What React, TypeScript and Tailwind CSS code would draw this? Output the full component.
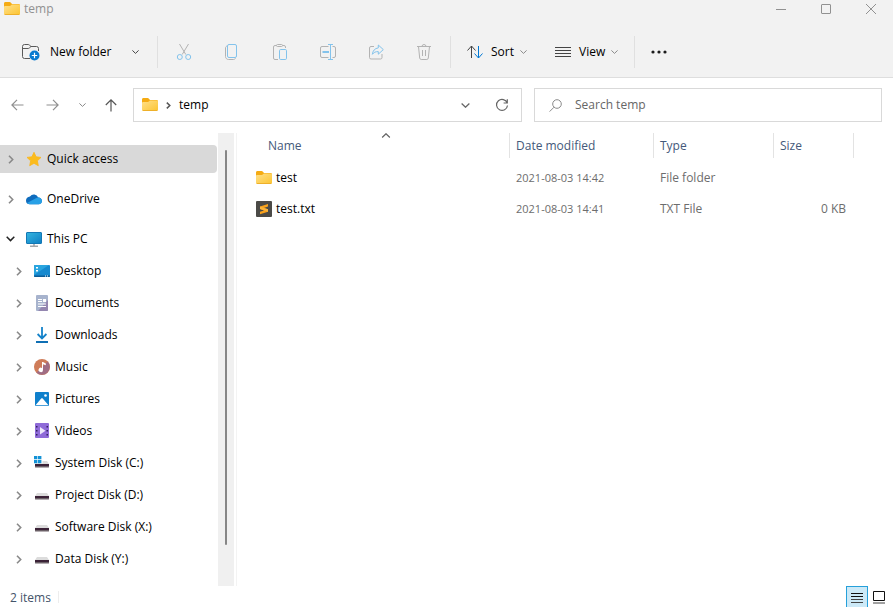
import { useState } from 'react';
import type { ReactNode } from 'react';

interface NavItem {
  label: string;
  icon: ReactNode;
}

interface FileRow {
  name: string;
  modified: string;
  type: string;
  size: string;
  icon: ReactNode;
}

const FolderIcon = () => (
  <svg width="16" height="16" viewBox="0 0 16 16" className="shrink-0" aria-hidden="true">
    <defs>
      <linearGradient id="folderFront" x1="0" y1="0" x2="1" y2="1">
        <stop offset="0" stopColor="#ffe08a" />
        <stop offset="1" stopColor="#fcc430" />
      </linearGradient>
    </defs>
    <path d="M0 2.500C0 1.700.6 1 1.400 1h4.200c.5 0 .8.2 1.100.5L8 3h6.600c.8 0 1.400.6 1.400 1.400V10H0z" fill="#f5ab13" />
    <path d="M0 6.200C0 5.500.5 5 1.200 5h4.600c.4 0 .7-.1 1-.4l.8-.8c.3-.2.5-.3.900-.3h6.300c.7 0 1.200.5 1.200 1.200v7.900c0 .8-.6 1.400-1.400 1.400H1.400C.6 14 0 13.400 0 12.600z" fill="url(#folderFront)" />
    <path d="M.3 13c.2.600.6 1 1.200 1h13c.6 0 1-.4 1.200-1z" fill="#eeb02a" />
  </svg>
);

const SublimeIcon = () => (
  <svg width="16" height="16" viewBox="0 0 16 16" className="shrink-0" aria-hidden="true">
    <rect width="16" height="16" rx="1" fill="#4b4a47" />
    <path d="M12 3v2.600L8 6.900l4 1.300v2.500L4 13.300v-2.600l4.100-1.300L4 8.100V5.500z" fill="#f9a11b" />
    <path d="M4 8.100l8 2.600V8.200L8 6.900 4 5.500z" fill="#fbb43c" />
  </svg>
);

const Chevron = ({ className, width = 7, height = 4 }: { className?: string; width?: number; height?: number }) => (
  <svg width={width} height={height} viewBox="0 0 7 4" className={className} fill="none" stroke="currentColor" strokeWidth="1" aria-hidden="true">
    <path d="M.4.4l3.100 3L6.600.4" />
  </svg>
);

const ChevronRight = ({ className }: { className?: string }) => (
  <svg width="6" height="9" viewBox="0 0 6 9" className={className} fill="none" stroke="currentColor" strokeWidth="1.600" aria-hidden="true">
    <path d="M1 .7l3.700 3.800L1 8.300" />
  </svg>
);

const DiskIcon = ({ system = false }: { system?: boolean }) => (
  <svg width="16" height="16" viewBox="0 0 16 16" aria-hidden="true">
    <path d="M3 6h10l2 3H1z" fill="#dcdcdc" />
    <rect x="1" y="9" width="14" height="3.500" rx=".5" fill="#6a5f66" />
    <rect x="1" y="9" width="14" height="2" fill="#3b2237" />
    {system && (
      <>
        <rect width="8.500" height="8.500" fill="#fff" />
        <path d="M0 1h3.400v3.300H0zM4 1h3.400v3.300H4zM0 5h3.400v3.300H0zM4 5h3.400v3.300H4z" fill="#1392d6" />
      </>
    )}
  </svg>
);

const StarIcon = () => (
  <svg width="16" height="16" viewBox="0 0 16 16" aria-hidden="true">
    <path d="M8 1.300l2.100 4.500 4.900.6-3.600 3.400.9 4.900L8 12.300l-4.300 2.400.9-4.900L1 6.400l4.900-.6z" fill="#fbbc1d" stroke="#fbb51a" strokeWidth=".8" strokeLinejoin="round" />
  </svg>
);

const CloudIcon = () => (
  <svg width="16" height="16" viewBox="0 0 16 16" aria-hidden="true">
    <path d="M4 5.500A4.600 4.600 0 0 1 12.200 6.600 3.400 3.400 0 0 1 16 10c0 1.900-1.500 3.200-3.300 3.200H3.800A3.800 3.800 0 0 1 0 9.400c0-2 1.700-3.700 4-3.900z" fill="#0f6cbd" />
    <path d="M1 12l8-4.200c1.500-.8 2.600-1.300 4-1.200 1.700.2 3 1.700 3 3.400 0 1.900-1.500 3.200-3.300 3.200H3.800C2.600 13.200 1.600 12.700 1 12z" fill="#28a0e6" />
  </svg>
);

const ComputerIcon = () => (
  <svg width="16" height="16" viewBox="0 0 16 16" aria-hidden="true">
    <defs>
      <linearGradient id="screen" x1="0" y1="0" x2="1" y2="1">
        <stop offset="0" stopColor="#35b5e0" />
        <stop offset="1" stopColor="#0f7fc4" />
      </linearGradient>
    </defs>
    <path d="M7 12h2v3H7z" fill="#b5b9bd" />
    <path d="M4 14.500h8V16H4z" fill="#a3a7ab" />
    <rect x=".5" y="1.500" width="15" height="11" rx=".5" fill="url(#screen)" stroke="#1478b5" />
  </svg>
);

const DesktopIcon = () => (
  <svg width="16" height="16" viewBox="0 0 16 16" aria-hidden="true">
    <rect y="2" width="16" height="12" rx="1" fill="#1689cf" />
    <path d="M0 12L15 2H1a1 1 0 0 0-1 1z" fill="#2aa5df" />
    <path d="M0 12.500h16v.5a1 1 0 0 1-1 1H1a1 1 0 0 1-1-1z" fill="#0b5c97" />
    <path d="M2 4h2v1.500H2zM2 7h2v1.500H2zM11 12.500h1v1h-1zM13 12.500h1v1h-1z" fill="#fff" />
  </svg>
);

const DocumentIcon = () => (
  <svg width="16" height="16" viewBox="0 0 16 16" aria-hidden="true">
    <rect x="2" width="12" height="16" rx="1" fill="#a7b3cd" />
    <path d="M14 5v10a1 1 0 0 1-1 1H4z" fill="#9486b0" />
    <path d="M4 4h4v1H4zM4 6h4v1H4zM9 4h3v3H9zM4 8.500h8v1H4zM4 11h8v1H4z" fill="#fff" />
  </svg>
);

const DownloadIcon = () => (
  <svg width="16" height="16" viewBox="0 0 16 16" fill="none" aria-hidden="true">
    <path d="M8 0v11.500M3.600 7L8 11.500 12.400 7" stroke="#1583ca" strokeWidth="1.800" />
    <path d="M2 15h12" stroke="#0f6fb4" strokeWidth="2" />
  </svg>
);

const MusicIcon = () => (
  <svg width="16" height="16" viewBox="0 0 16 16" aria-hidden="true">
    <circle cx="8" cy="8" r="8" fill="#cf7c59" />
    <path d="M13.700 2.400A8 8 0 0 1 2.400 13.700z" fill="#a06d84" />
    <path d="M8 3h1l2.800 1.600v1.700L9 5.300V11a2.200 2.200 0 1 1-1-1.900z" fill="#fff" />
  </svg>
);

const PictureIcon = () => (
  <svg width="16" height="16" viewBox="0 0 16 16" aria-hidden="true">
    <rect x="1" y="1" width="14" height="14" rx="1" fill="#0f80cc" />
    <path d="M1.500 14.200L7.200 7.600c.4-.5 1.100-.5 1.500 0l5.800 6.600z" fill="#fff" />
    <circle cx="11.500" cy="4.500" r="1.300" fill="#fff" />
  </svg>
);

const VideoIcon = () => (
  <svg width="16" height="16" viewBox="0 0 16 16" aria-hidden="true">
    <rect x="1" width="14" height="15" rx="1" fill="#8f6bd8" />
    <path d="M2 3h1.500v1.500H2zM2 7h1.500v1.500H2zM2 11h1.500v1.500H2zM12.500 3H14v1.500h-1.500zM12.500 7H14v1.500h-1.500zM12.500 11H14v1.500h-1.500z" fill="#33205e" />
    <path d="M6 4l5.500 3.700L6 11.500z" fill="#eee8fb" />
  </svg>
);

const pcItems: NavItem[] = [
  { label: 'Desktop', icon: <DesktopIcon /> },
  { label: 'Documents', icon: <DocumentIcon /> },
  { label: 'Downloads', icon: <DownloadIcon /> },
  { label: 'Music', icon: <MusicIcon /> },
  { label: 'Pictures', icon: <PictureIcon /> },
  { label: 'Videos', icon: <VideoIcon /> },
  { label: 'System Disk (C:)', icon: <DiskIcon system /> },
  { label: 'Project Disk (D:)', icon: <DiskIcon /> },
  { label: 'Software Disk (X:)', icon: <DiskIcon /> },
  { label: 'Data Disk (Y:)', icon: <DiskIcon /> }
];

const files: FileRow[] = [
  { name: 'test', modified: '2021-08-03 14:42', type: 'File folder', size: '', icon: <FolderIcon /> },
  { name: 'test.txt', modified: '2021-08-03 14:41', type: 'TXT File', size: '0 KB', icon: <SublimeIcon /> }
];

const GRAY = '#b3b3b3';
const BLUE = '#83c3ec';

const actions: NavItem[] = [
  {
    label: 'Cut',
    icon: (
      <>
        <path d="M4.500 1l6.300 10.500M13.500 1L7.200 11.500" stroke={GRAY} />
        <circle cx="4.800" cy="14" r="2.500" stroke={BLUE} />
        <circle cx="13.200" cy="14" r="2.500" stroke={BLUE} />
      </>
    )
  },
  {
    label: 'Copy',
    icon: (
      <>
        <path d="M4 3c-.9.300-1.500 1.100-1.500 2v8.500c0 1.700 1.300 3 3 3h5c.9 0 1.600-.5 2-1.200" stroke={GRAY} />
        <rect x="4.500" y="1.500" width="9" height="13" rx="1.500" stroke={BLUE} />
      </>
    )
  },
  {
    label: 'Paste',
    icon: (
      <>
        <path d="M7 16.500H4A1.500 1.500 0 0 1 2.500 15V4A1.500 1.500 0 0 1 4 2.500h1.500M11.500 2.500H13A1.500 1.500 0 0 1 14.500 4v1" stroke={GRAY} />
        <rect x="5.500" y="1.500" width="6" height="2" rx="1" stroke={GRAY} />
        <rect x="8.500" y="6.500" width="7" height="10" rx="1.200" stroke={BLUE} />
      </>
    )
  },
  {
    label: 'Rename',
    icon: (
      <>
        <path d="M9.500 3.500H3A1.500 1.500 0 0 0 1.500 5v8A1.500 1.500 0 0 0 3 14.500h6.500M13.500 3.500H15A1.500 1.500 0 0 1 16.500 5v8a1.500 1.500 0 0 1-1.500 1.500h-1.500" stroke={GRAY} />
        <path d="M11.500 1.500v15M9 1.500h5M9 16.500h5" stroke={BLUE} />
        <path d="M3.500 9H10" stroke={BLUE} strokeWidth="2" />
      </>
    )
  },
  {
    label: 'Share',
    icon: (
      <>
        <path d="M7 3.500H4A1.500 1.500 0 0 0 2.500 5v9.500A1.500 1.500 0 0 0 4 16h9.500a1.500 1.500 0 0 0 1.500-1.500V11" stroke={GRAY} />
        <path d="M11.300 2l5 4.600-5 4.600V8.600c-2.800-.1-4.500.8-5.900 2.700.3-3.500 2.400-6 5.900-6.400z" stroke={BLUE} strokeLinejoin="round" />
      </>
    )
  },
  {
    label: 'Delete',
    icon: (
      <>
        <path d="M2 3.500h14M7 3.500a2 2 0 0 1 4 0M3.500 3.500l1.200 11.600c.1.800.7 1.400 1.500 1.400h5.600c.8 0 1.400-.6 1.500-1.400l1.200-11.600M7.500 7v6M10.500 7v6" stroke={GRAY} />
      </>
    )
  }
];

const Divider = () => <div className="h-8 w-px shrink-0 bg-[#e0e0e0]" />;

const NavRow = ({ item, open = false, nested = false, selected = false }: { item: NavItem; open?: boolean; nested?: boolean; selected?: boolean }) => (
  <button
    type="button"
    className={`flex w-full items-center text-left ${nested ? 'pl-3.5' : 'pl-1.5'} ${
      selected ? 'h-7 rounded-r-sm bg-[#d9d9d9]' : 'h-8'
    }`}
  >
    <span className="flex w-5 items-center pl-0.5">
      {open ? (
        <svg width="9" height="6" viewBox="0 0 9 6" className="-ml-0.5 text-[#222]" fill="none" stroke="currentColor" strokeWidth="1.500" aria-hidden="true">
          <path d="M.7.8l3.800 3.800L8.300.8" />
        </svg>
      ) : (
        <ChevronRight className="text-[#8a8a8a]" />
      )}
    </span>
    {item.icon}
    <span className="pl-[5px]">{item.label}</span>
  </button>
);

const TitleBar = () => (
  <div className="flex h-4 items-center pt-px pl-1 text-[#919191]">
    <FolderIcon />
    <h1 className="flex-1 pl-1">temp</h1>
    <button type="button" aria-label="Minimize" className="flex w-[45px] justify-center">
      <svg width="10" height="10" viewBox="0 0 10 10" stroke="currentColor" aria-hidden="true">
        <path d="M0 5.500h10" />
      </svg>
    </button>
    <button type="button" aria-label="Maximize" className="flex w-[45px] justify-center">
      <svg width="10" height="10" viewBox="0 0 10 10" fill="none" stroke="currentColor" aria-hidden="true">
        <rect x=".5" y=".5" width="9" height="9" rx=".5" />
      </svg>
    </button>
    <button type="button" aria-label="Close" className="flex w-[45px] justify-center">
      <svg width="10" height="10" viewBox="0 0 10 10" stroke="currentColor" aria-hidden="true">
        <path d="M0 0l10 10M10 0L0 10" />
      </svg>
    </button>
  </div>
);

const Toolbar = () => (
  <div className="flex h-[62px] items-center border-b border-[#dedede] pt-2.5">
    <button type="button" className="flex w-[157px] shrink-0 items-center pl-[22px] text-left">
      <svg width="18" height="18" viewBox="0 0 18 18" fill="none" aria-hidden="true">
        <path d="M8 15.500H2.500a2 2 0 0 1-2-2v-10a2 2 0 0 1 2-2H6c.6 0 1 .2 1.400.6L9 3.500h5.500a2 2 0 0 1 2 2V8M.5 5.500H6c.5 0 1-.2 1.300-.500L9 3.500" stroke="#5a5a5a" />
        <circle cx="12.500" cy="12.500" r="5" fill="#0a7bd0" />
        <path d="M12.500 9.800v5.400M9.800 12.500h5.400" stroke="#fff" strokeWidth="1.200" />
      </svg>
      <span className="w-[92px] pl-2.5">New folder</span>
      <Chevron className="text-[#444]" />
    </button>
    <Divider />
    <div className="flex px-0.5">
      {actions.map(action => (
        <button key={action.label} type="button" aria-label={action.label} className="flex w-12 justify-center">
          <svg width="18" height="18" viewBox="0 0 18 18" fill="none" aria-hidden="true">
            {action.icon}
          </svg>
        </button>
      ))}
    </div>
    <Divider />
    <button type="button" className="flex w-[88px] shrink-0 items-center pl-4 text-left">
      <svg width="16" height="16" viewBox="0 0 16 16" fill="none" aria-hidden="true">
        <path d="M4.500 14V2M.5 6.500l4-4.500 4 4.500" stroke="#444" />
        <path d="M11.500 2v12M7.500 9.500l4 4.500 4-4.500" stroke="#0078d4" />
      </svg>
      <span className="w-[37px] pl-2">Sort</span>
      <Chevron className="text-[#8a8a8a]" />
    </button>
    <button type="button" className="flex w-[95px] shrink-0 items-center pl-4 text-left">
      <svg width="16" height="16" viewBox="0 0 16 16" stroke="#444" aria-hidden="true">
        <path d="M0 3.500h16M0 6.500h16M0 9.500h16M0 12.500h16" />
      </svg>
      <span className="w-10 pl-2">View</span>
      <Chevron className="text-[#8a8a8a]" />
    </button>
    <Divider />
    <button type="button" aria-label="See more" className="flex w-12 justify-center">
      <svg width="16" height="4" viewBox="0 0 16 4" fill="#1b1b1b" aria-hidden="true">
        <circle cx="2" cy="2" r="1.600" />
        <circle cx="8" cy="2" r="1.600" />
        <circle cx="14" cy="2" r="1.600" />
      </svg>
    </button>
  </div>
);

const AddressBar = () => {
  const [query, setQuery] = useState('');

  return (
    <div className="grid grid-cols-[3fr_2fr] gap-3 pt-2.5 pr-[11px] pb-[11px]">
      <div className="flex items-center">
        <div className="flex w-[133px] shrink-0 items-center">
          <button type="button" aria-label="Back" className="flex w-[35px] justify-center">
            <svg width="13" height="12" viewBox="0 0 13 12" fill="none" stroke="#8f8f8f" strokeWidth="1.200" aria-hidden="true">
              <path d="M12.500 6H1M6 .8L.9 6 6 11.200" />
            </svg>
          </button>
          <button type="button" aria-label="Forward" className="flex w-[35px] justify-center">
            <svg width="13" height="12" viewBox="0 0 13 12" fill="none" stroke="#8f8f8f" strokeWidth="1.200" aria-hidden="true">
              <path d="M.5 6H12M7 .8L12.100 6 7 11.200" />
            </svg>
          </button>
          <button type="button" aria-label="Recent locations" className="flex w-6 justify-center text-[#888]">
            <Chevron />
          </button>
          <button type="button" aria-label="Up" className="flex w-[34px] justify-center">
            <svg width="12" height="13" viewBox="0 0 12 13" fill="none" stroke="#555" strokeWidth="1.200" aria-hidden="true">
              <path d="M6 12.500V1M.8 6L6 .9 11.200 6" />
            </svg>
          </button>
        </div>
        <div className="flex h-[34px] flex-1 items-center border border-[#d9d9d9] bg-white pl-2">
          <FolderIcon />
          <svg width="5" height="7" viewBox="0 0 5 7" className="ml-2 text-[#555]" fill="none" stroke="currentColor" strokeWidth="1.500" aria-hidden="true">
            <path d="M.8.6l3 2.900-3 2.900" />
          </svg>
          <button type="button" className="flex-1 pl-2 text-left">temp</button>
          <button type="button" aria-label="Previous locations" className="flex w-9 justify-center text-[#666]">
            <Chevron width={9} height={5} />
          </button>
          <button type="button" aria-label="Refresh" className="flex w-[38px] justify-center">
            <svg width="14" height="14" viewBox="0 0 14 14" fill="none" stroke="#666" strokeWidth="1.200" aria-hidden="true">
              <path d="M12.200 5A5.500 5.500 0 1 0 12.500 7.500M12.300 1.300V5H8.600" />
            </svg>
          </button>
        </div>
      </div>
      <label className="flex h-[34px] items-center border border-[#d9d9d9] bg-white pl-3.5">
        <svg width="13" height="13" viewBox="0 0 13 13" fill="none" stroke="#8a8a8a" aria-hidden="true">
          <circle cx="8" cy="5" r="4.300" />
          <path d="M5 8.200L.6 12.600" />
        </svg>
        <input
          type="search"
          aria-label="Search temp"
          placeholder="Search temp"
          value={query}
          onChange={e => setQuery(e.target.value)}
          className="min-w-0 flex-1 pl-[13px] outline-none placeholder:text-[#666]"
        />
      </label>
    </div>
  );
};

const Sidebar = () => (
  <div className="flex w-[237px] shrink-0 border-r border-[#f3f3f3]">
    <nav className="w-[218px] pt-3 pr-px pb-2.5">
      <NavRow item={{ label: 'Quick access', icon: <StarIcon /> }} selected />
      <div className="pt-2.5">
        <NavRow item={{ label: 'OneDrive', icon: <CloudIcon /> }} />
      </div>
      <div className="pt-2">
        <NavRow item={{ label: 'This PC', icon: <ComputerIcon /> }} open />
        {pcItems.map(item => (
          <NavRow key={item.label} item={item} nested />
        ))}
      </div>
    </nav>
    <div className="flex w-4 justify-center bg-[#f0f0f0] pt-[17px] pb-[41px]">
      <div className="w-0.5 rounded-full bg-[#868686]" />
    </div>
  </div>
);

const FileTable = () => (
  <div className="flex-1">
    <table className="w-full table-fixed text-left">
      <thead className="text-[#44597a]">
        <tr>
          <th className="pb-1 pl-[25px] font-normal" aria-sort="ascending">
            <button type="button" className="relative flex h-[25px] w-full items-center border-r border-[#e3e3e3] pl-1.5">
              Name
              <Chevron width={9} height={5} className="absolute top-0 left-1/2 -translate-x-1/2 rotate-180 text-[#666]" />
            </button>
          </th>
          <th className="w-36 pb-1 font-normal">
            <button type="button" className="flex h-[25px] w-full items-center border-r border-[#e3e3e3] pl-1.5">Date modified</button>
          </th>
          <th className="w-[120px] pb-1 font-normal">
            <button type="button" className="flex h-[25px] w-full items-center border-r border-[#e3e3e3] pl-1.5">Type</button>
          </th>
          <th className="w-20 pb-1 font-normal">
            <button type="button" className="flex h-[25px] w-full items-center border-r border-[#e3e3e3] pl-1.5">Size</button>
          </th>
          <th className="w-[39px]"></th>
        </tr>
      </thead>
      <tbody className="text-[#6d6d6d]">
        {files.map(file => (
          <tr key={file.name} className="h-[31px]">
            <td className="pl-[19px] text-black">
              <div className="flex items-center gap-1">
                {file.icon}
                {file.name}
              </div>
            </td>
            <td className="pl-1.5 text-[11px]">{file.modified}</td>
            <td className="pl-1.5">{file.type}</td>
            <td className="pr-2 text-right">{file.size}</td>
            <td></td>
          </tr>
        ))}
      </tbody>
    </table>
  </div>
);

const StatusBar = () => (
  <div className="flex h-[21px] items-center pr-[3px] pl-2.5 text-[#44546a]">
    <span className="w-12 pt-0.5">{files.length} items</span>
    <div className="h-3 w-px bg-[#ededed]" />
    <div className="flex-1" />
    <button type="button" aria-label="Details view" className="flex h-[21px] w-[22px] items-center justify-center border border-b-0 border-[#26a0da] bg-[#cce9f7] pt-px">
      <svg width="12" height="12" viewBox="0 0 12 12" stroke="#111" aria-hidden="true">
        <path d="M0 1.500h12M0 4.500h12" />
        <path d="M0 7.500h12M0 10.500h12" stroke="#444" />
      </svg>
    </button>
    <button type="button" aria-label="Large icons view" className="flex h-[21px] w-[22px] items-center justify-center pt-px">
      <svg width="12" height="13" viewBox="0 0 12 13" fill="none" stroke="#111" aria-hidden="true">
        <path d="M.5.5h11v9H.5z" />
        <path d="M0 12h12" stroke="#444" />
      </svg>
    </button>
  </div>
);

const App = () => {
  return (
    <div className="flex min-h-screen flex-col bg-white font-['Open_Sans','Noto_Sans',sans-serif] text-[12px] leading-4 text-black">
      <header className="bg-[#f2f2f2]">
        <TitleBar />
        <Toolbar />
      </header>
      <AddressBar />
      <main className="flex flex-1">
        <Sidebar />
        <FileTable />
      </main>
      <StatusBar />
    </div>
  );
};

export default App;
